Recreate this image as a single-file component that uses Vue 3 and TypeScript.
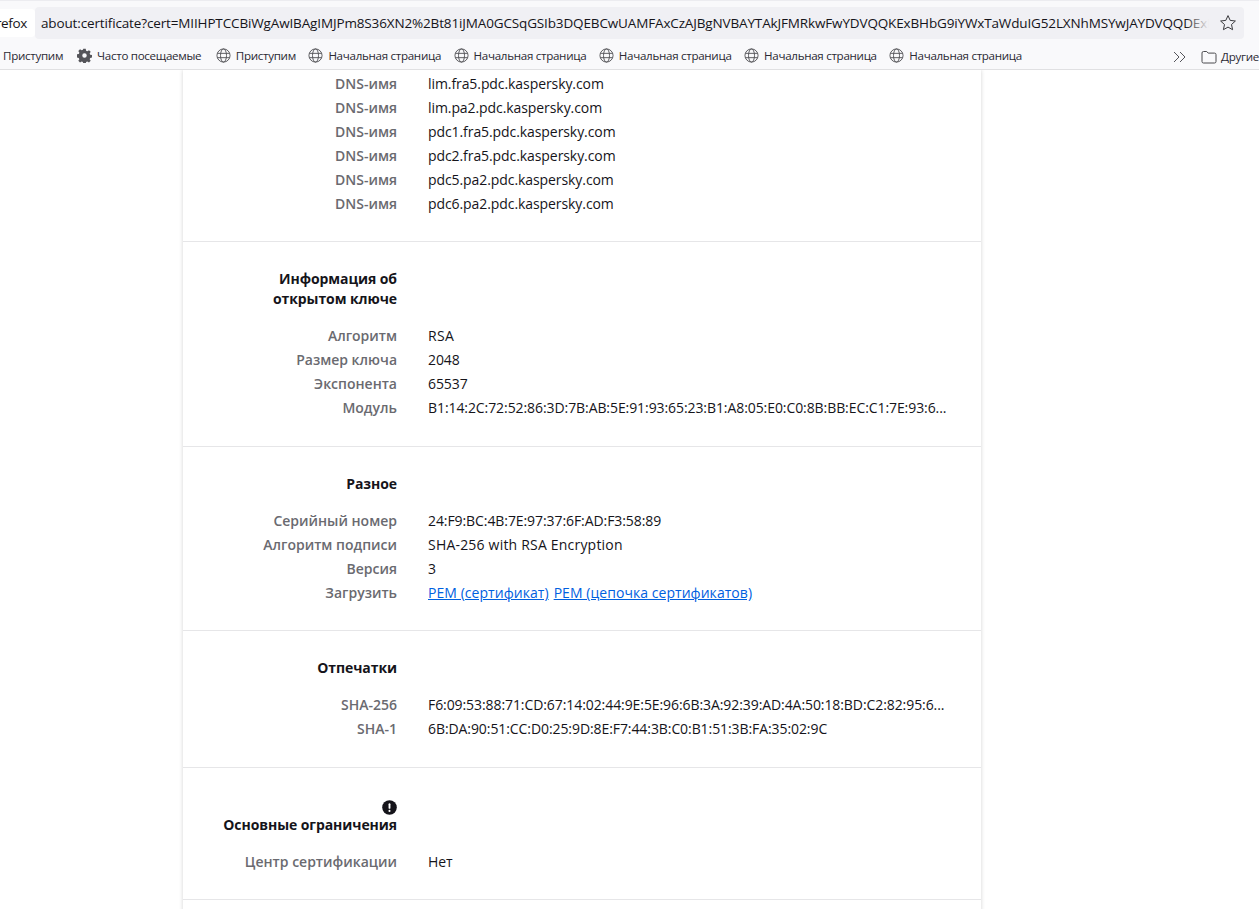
<script setup lang="ts">
interface Row { label: string; value?: string; links?: string[]; track?: number }
interface Section { title?: string[]; warn?: boolean; rows: Row[] }

const bookmarks = [
  { label: 'Приступим', icon: 'none' },
  { label: 'Часто посещаемые', icon: 'gear' },
  { label: 'Приступим', icon: 'globe' },
  { label: 'Начальная страница', icon: 'globe' },
  { label: 'Начальная страница', icon: 'globe' },
  { label: 'Начальная страница', icon: 'globe' },
  { label: 'Начальная страница', icon: 'globe' },
  { label: 'Начальная страница', icon: 'globe' },
]

const sections: Section[] = [
  {
    rows: [
      { label: 'DNS-имя', value: 'lim.fra5.pdc.kaspersky.com' },
      { label: 'DNS-имя', value: 'lim.pa2.pdc.kaspersky.com' },
      { label: 'DNS-имя', value: 'pdc1.fra5.pdc.kaspersky.com' },
      { label: 'DNS-имя', value: 'pdc2.fra5.pdc.kaspersky.com' },
      { label: 'DNS-имя', value: 'pdc5.pa2.pdc.kaspersky.com' },
      { label: 'DNS-имя', value: 'pdc6.pa2.pdc.kaspersky.com' },
    ],
  },
  {
    title: ['Информация об', 'открытом ключе'],
    rows: [
      { label: 'Алгоритм', value: 'RSA', track: 0.3 },
      { label: 'Размер ключа', value: '2048' },
      { label: 'Экспонента', value: '65537' },
      { label: 'Модуль', value: 'B1:14:2C:72:52:86:3D:7B:AB:5E:91:93:65:23:B1:A8:05:E0:C0:8B:BB:EC:C1:7E:93:6...' },
    ],
  },
  {
    title: ['Разное'],
    rows: [
      { label: 'Серийный номер', value: '24:F9:BC:4B:7E:97:37:6F:AD:F3:58:89' },
      { label: 'Алгоритм подписи', value: 'SHA-256 with RSA Encryption', track: 0.2 },
      { label: 'Версия', value: '3' },
      { label: 'Загрузить', links: ['PEM (сертификат)', 'PEM (цепочка сертификатов)'] },
    ],
  },
  {
    title: ['Отпечатки'],
    rows: [
      { label: 'SHA-256', value: 'F6:09:53:88:71:CD:67:14:02:44:9E:5E:96:6B:3A:92:39:AD:4A:50:18:BD:C2:82:95:6...' },
      { label: 'SHA-1', value: '6B:DA:90:51:CC:D0:25:9D:8E:F7:44:3B:C0:B1:51:3B:FA:35:02:9C' },
    ],
  },
  {
    title: ['Основные ограничения'],
    warn: true,
    rows: [{ label: 'Центр сертификации', value: 'Нет' }],
  },
  { rows: [] },
]
</script>

<template>
  <div class="window">
    <header class="chrome">
      <div class="tabstrip"></div>
      <div class="navbar">
        <div class="identity"><span>Firefox</span></div>
        <div class="urlbar">
          <span class="url">about:certificate?cert=MIIHPTCCBiWgAwIBAgIMJPm8S36XN2%2Bt81iJMA0GCSqGSIb3DQEBCwUAMFAxCzAJBgNVBAYTAkJFMRkwFwYDVQQKExBHbG9iYWxTaWduIG52LXNhMSYwJAYDVQQDExBHbG9iYWxTaWdu</span>
          <span class="fade"></span>
          <svg class="star" viewBox="0 0 18 18" width="18" height="18" fill="none" stroke="#3a3a3e" stroke-width="1" stroke-linejoin="round">
            <path d="M9 1.6l2.2 4.8 5.2.6-3.9 3.5 1.1 5.2L9 13.1l-4.6 2.6 1.1-5.2L1.6 7l5.2-.6z" />
          </svg>
        </div>
      </div>
      <nav class="bookmarks">
        <div v-for="(b, i) in bookmarks" :key="i" class="bookmark">
          <svg v-if="b.icon === 'gear'" viewBox="0 0 16 16" width="15" height="15" fill="#55555a">
            <path fill-rule="evenodd" d="M6.7 0.8h2.6l.4 2 1.3.6 1.8-1.1 1.8 1.8-1.1 1.8.6 1.3 2 .4v2.6l-2 .4-.6 1.3 1.1 1.8-1.8 1.8-1.8-1.1-1.3.6-.4 2H6.7l-.4-2-1.3-.6-1.8 1.1-1.8-1.8 1.1-1.8-.6-1.3-2-.4V6.7l2-.4.6-1.3-1.1-1.8 1.8-1.8 1.8 1.1 1.3-.6zM8 5.6a2.4 2.4 0 1 0 0 4.8 2.4 2.4 0 0 0 0-4.8z" />
          </svg>
          <svg v-else-if="b.icon === 'globe'" viewBox="0 0 16 16" width="15" height="15" fill="none" stroke="#55555a" stroke-width="1">
            <circle cx="8" cy="8" r="7" />
            <ellipse cx="8" cy="8" rx="3.2" ry="7" />
            <path d="M1.5 5.7h13M1.5 10.3h13" />
          </svg>
          <span>{{ b.label }}</span>
        </div>
        <div class="bookmark-end">
          <svg viewBox="0 0 14 12" width="14" height="12" fill="none" stroke="#55555a" stroke-width="1">
            <path d="M1 1l5 5-5 5M7 1l5 5-5 5" />
          </svg>
          <div class="other">
            <svg viewBox="0 0 16 14" width="16" height="14" fill="none" stroke="#4a4a4e" stroke-width="1">
              <path d="M1 3a1.5 1.5 0 0 1 1.5-1.5h3.2l1.5 1.6h6.3A1.5 1.5 0 0 1 15 4.6v6.9a1.5 1.5 0 0 1-1.5 1.5h-11A1.5 1.5 0 0 1 1 11.5z" />
            </svg>
            <span>Другие</span>
          </div>
        </div>
      </nav>
    </header>

    <main class="page">
      <article class="card">
        <section v-for="(s, i) in sections" :key="i" class="section" :class="{ first: !s.title && s.rows.length > 0, tail: !s.rows.length }">
          <div v-if="s.title" class="heading">
            <svg v-if="s.warn" class="warn" viewBox="0 0 16 16" width="15" height="15">
              <circle cx="8" cy="8" r="7.8" fill="#15141a" />
              <rect x="7" y="3.4" width="2" height="6" rx="1" fill="#fff" />
              <circle cx="8" cy="11.6" r="1.1" fill="#fff" />
            </svg>
            <span v-for="t in s.title" :key="t">{{ t }}</span>
          </div>
          <div v-for="(r, j) in s.rows" :key="j" class="row">
            <div class="label">{{ r.label }}</div>
            <div class="value" :style="r.track ? { letterSpacing: r.track + 'px' } : undefined">
              <template v-if="r.links">
                <a v-for="l in r.links" :key="l" class="link">{{ l }}</a>
              </template>
              <template v-else>{{ r.value }}</template>
            </div>
          </div>
        </section>
      </article>
    </main>
  </div>
</template>

<style>
html, body { margin: 0; height: 100%; overflow: hidden; background: #fff; }
</style>

<style scoped>
.window {
  width: 1259px;
  height: 909px;
  overflow: hidden;
  display: flex;
  flex-direction: column;
  font-family: "Open Sans", "Noto Sans", sans-serif;
  color: #15141a;
  background: #fff;
}
.chrome {
  flex: none;
  height: 70px;
  box-sizing: border-box;
  background: #f9f9fb;
  border-bottom: 1px solid #e0e0e2;
}
.tabstrip { height: 1px; background: #ececf0; }
.navbar {
  display: flex;
  align-items: center;
  height: 40px;
  box-sizing: border-box;
  padding-top: 3px;
}
.identity {
  width: 35px;
  height: 28px;
  box-sizing: border-box;
  background: #fff;
  border-radius: 0 4px 4px 0;
  font-size: 13.5px;
  letter-spacing: -0.35px;
  line-height: 28px;
  padding-right: 8px;
  flex: none;
  display: flex;
  justify-content: flex-end;
  overflow: hidden;
}
.urlbar {
  position: relative;
  flex: none;
  width: 1209px;
  height: 32px;
  box-sizing: border-box;
  background: #f0f0f4;
  border-radius: 4px;
  display: flex;
  align-items: center;
  overflow: hidden;
}
.url {
  width: 1174px;
  flex: none;
  box-sizing: border-box;
  padding-left: 6px;
  font-size: 13.5px;
  letter-spacing: -0.14px;
  white-space: nowrap;
  overflow: hidden;
}
.fade {
  position: absolute;
  left: 1150px;
  top: 0;
  width: 24px;
  height: 32px;
  background: linear-gradient(to right, rgba(240, 240, 244, 0), #f0f0f4);
}
.star { flex: none; margin-left: 10px; }
.bookmarks {
  display: flex;
  align-items: center;
  height: 29px;
  padding-left: 3px;
  font-size: 11.6px;
  letter-spacing: -0.3px;
  color: #2b2a33;
  white-space: nowrap;
}
.bookmark {
  display: flex;
  align-items: center;
  gap: 5px;
  margin-right: 12.5px;
}
.bookmark:nth-child(1) { margin-right: 14px; }
.bookmark:nth-child(2) { margin-right: 14.5px; }
.bookmark-end {
  position: absolute;
  left: 1173px;
  top: 49px;
  display: flex;
  align-items: center;
  gap: 14px;
}
.other { display: flex; align-items: center; gap: 4px; }
.page {
  flex: 1;
  min-height: 0;
  overflow: hidden;
  display: flex;
  justify-content: flex-start;
  padding-left: 183px;
}
.card {
  width: 798px;
  flex: none;
  align-self: flex-start;
  background: #fff;
  box-shadow: 0 0 4px rgba(12, 12, 13, 0.18);
}
.section {
  padding: 27px 0 25.6px;
  border-bottom: 1px solid #e6e6e8;
}
.section.first { padding-top: 2px; padding-bottom: 25px; }
.section.tail { height: 60px; border-bottom: 0; }
.heading {
  width: 214px;
  display: flex;
  flex-direction: column;
  align-items: flex-end;
  font-size: 14px;
  line-height: 20px;
  font-weight: 700;
  letter-spacing: -0.08px;
  color: #15141a;
  margin-bottom: 15px;
}
.warn { margin-top: 5px; }
.row {
  display: grid;
  grid-template-columns: 214px 1fr;
  column-gap: 31px;
  line-height: 24px;
  height: 24px;
  font-size: 14px;
  white-space: nowrap;
}
.label {
  text-align: right;
  font-weight: 600;
  color: #6a6a70;
  letter-spacing: 0;
}
.value { letter-spacing: -0.08px; color: #15141a; }
.link {
  color: #0060df;
  text-decoration: underline;
  margin-right: 5px;
  letter-spacing: 0.05px;
}
</style>
